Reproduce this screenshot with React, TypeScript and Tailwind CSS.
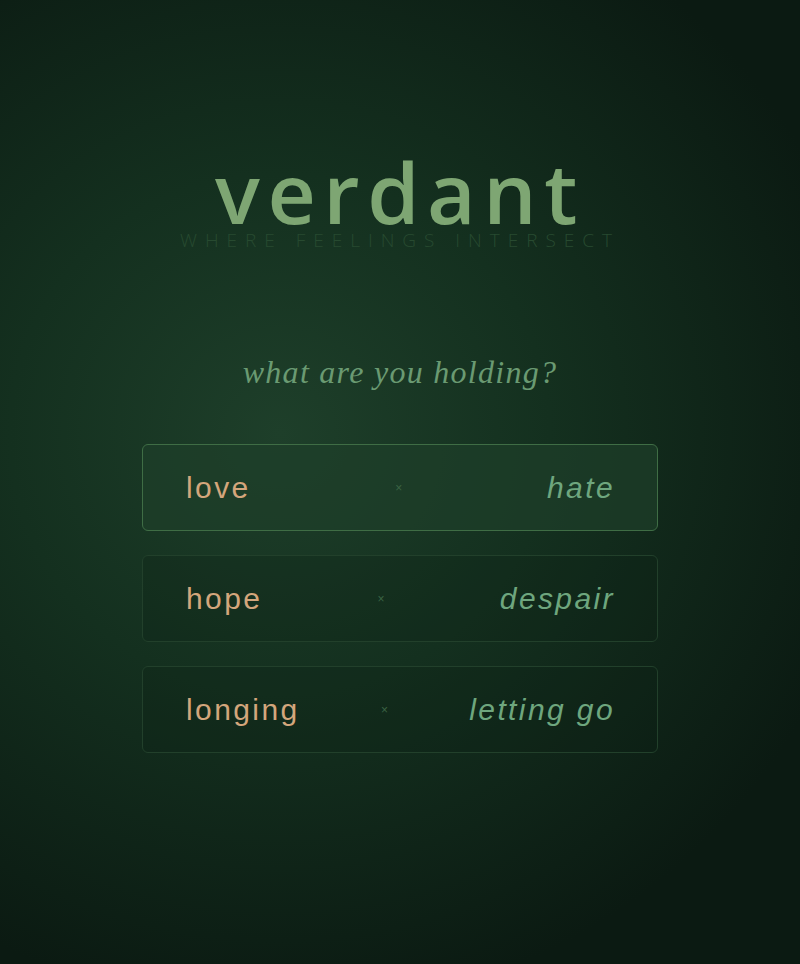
import React from "react";

const pairs = [
  { a: "love", b: "hate", active: true },
  { a: "hope", b: "despair", active: false },
  { a: "longing", b: "letting go", active: false },
];

export default function App() {
  return (
    <div className="min-h-screen w-full bg-[radial-gradient(ellipse_75%_60%_at_35%_45%,#1e3f2a_0%,#14301f_45%,#0b1a12_100%)] flex flex-col items-center pt-[154px]">
      <h1 className="m-0 text-[84px] leading-[76px] font-semibold tracking-[0.09em] text-[#7ea673] [font-family:'Open_Sans',sans-serif]">
        verdant
      </h1>
      <div className="mt-[1px] text-[19px] leading-none font-light tracking-[0.42em] text-[#274a30] [font-family:'Open_Sans',sans-serif]">
        WHERE FEELINGS INTERSECT
      </div>
      <div className="mt-[106px] text-[32px] leading-none italic tracking-[0.04em] text-[#6a9a72] [font-family:'Liberation_Serif',serif]">
        what are you holding?
      </div>
      <div className="mt-[56px] flex flex-col gap-6 w-[516px]">
        {pairs.map((p) => (
          <div
            key={p.a}
            className={
              p.active
                ? "h-[87px] rounded-md border border-[#3f6d45] bg-[#1e3e2a]/70 flex items-center justify-between pl-[43px] pr-[42px] [font-family:'Liberation_Sans',Arial,sans-serif]"
                : "h-[87px] rounded-md border border-[#22402b] bg-[#0c1e14]/25 flex items-center justify-between pl-[43px] pr-[42px] [font-family:'Liberation_Sans',Arial,sans-serif]"
            }
          >
            <span className="text-[30px] leading-none tracking-[0.08em] text-[#d3a67c]">{p.a}</span>
            <span className="text-[12px] leading-none text-[#3b6444]">×</span>
            <span className="text-[30px] leading-none italic tracking-[0.08em] text-[#6ea67e]">{p.b}</span>
          </div>
        ))}
      </div>
    </div>
  );
}
